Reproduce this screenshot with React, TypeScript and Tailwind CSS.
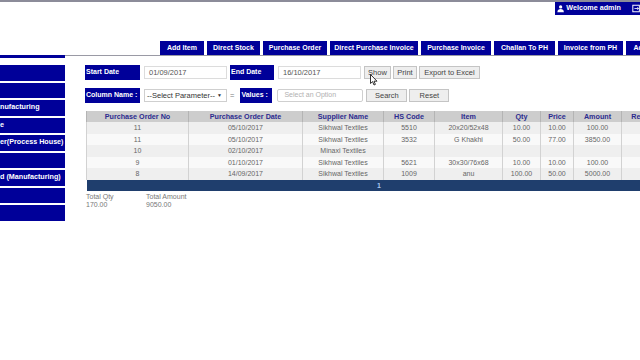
import React from 'react'

const tabs: [string, string][] = [
  ['Add Item', 'w-[44px]'],
  ['Direct Stock', 'w-[53px]'],
  ['Purchase Order', 'w-[64px]'],
  ['Direct Purchase Invoice', 'w-[88px]'],
  ['Purchase Invoice', 'w-[70px]'],
  ['Challan To PH', 'w-[61px]'],
  ['Invoice from PH', 'w-[65px]'],
  ['Add Opening Stock', 'w-[80px]'],
]

const sideItems = ['', '', 'nufacturing', 'e', 'er(Process House)', '', 'd (Manufacturing)', '', '']

const columns: [string, string][] = [
  ['Purchase Order No', 'w-[102px]'],
  ['Purchase Order Date', 'w-[114px]'],
  ['Supplier Name', 'w-[81px]'],
  ['HS Code', 'w-[51px]'],
  ['Item', 'w-[68px]'],
  ['Qty', 'w-[38px]'],
  ['Price', 'w-[33px]'],
  ['Amount', 'w-[48px]'],
  ['Remarks', 'w-[50px]'],
]

const rows = [
  ['11', '05/10/2017', 'Sikhwal Textiles', '5510', '20x20/52x48', '10.00', '10.00', '100.00', ''],
  ['11', '05/10/2017', 'Sikhwal Textiles', '3532', 'G Khakhi', '50.00', '77.00', '3850.00', ''],
  ['10', '02/10/2017', 'Minaxi Textiles', '', '', '', '', '', ''],
  ['9', '01/10/2017', 'Sikhwal Textiles', '5621', '30x30/76x68', '10.00', '10.00', '100.00', ''],
  ['8', '14/09/2017', 'Sikhwal Textiles', '1009', 'anu', '100.00', '50.00', '5000.00', ''],
]

function Label({ text, className }: { text: string; className: string }) {
  return (
    <div className={`h-[15px] bg-[#000099] text-white font-bold text-[7px] flex items-center pl-[1px] whitespace-nowrap ${className}`}>
      {text}
    </div>
  )
}

function Btn({ text, className }: { text: string; className: string }) {
  return (
    <button className={`h-[13px] bg-[#eeeeee] border border-[#c4c4c4] text-[7.5px] text-[#444] flex items-center justify-center leading-none whitespace-nowrap ${className}`}>
      {text}
    </button>
  )
}

export default function App() {
  return (
    <div className="relative w-[640px] h-[360px] overflow-hidden bg-white border-t-2 border-[#8c8c99] font-['Liberation_Sans',Arial,sans-serif]">
      {/* top bar */}
      <div className="flex justify-end h-[13px]">
        <div className="w-[85px] bg-[#000099] flex items-center pl-[2px] text-white font-bold text-[7.2px] whitespace-nowrap">
          <svg width="8" height="9" viewBox="0 0 10 10" className="mr-[2px]">
            <circle cx="5" cy="2.8" r="2.3" fill="white" />
            <path d="M0.5 10 C0.8 6.5 2.5 5.6 5 5.6 C7.5 5.6 9.2 6.5 9.5 10 Z" fill="white" />
          </svg>
          Welcome admin
          <svg width="9" height="9" viewBox="0 0 10 10" className="ml-[11px]">
            <rect x="1" y="1" width="8" height="8" fill="none" stroke="white" strokeWidth="1.2" />
            <path d="M3 5 H8 M6.5 3.5 L8 5 L6.5 6.5" stroke="white" strokeWidth="1" fill="none" />
          </svg>
        </div>
      </div>

      {/* tabs */}
      <div className="mt-[26px] pl-[160px] flex gap-[3px] h-[14px]">
        {tabs.map(([t, w]) => (
          <div key={t} className={`${w} shrink-0 bg-[#000099] text-white font-bold text-[7px] flex items-center justify-center whitespace-nowrap`}>
            {t}
          </div>
        ))}
      </div>

      <div className="flex">
        {/* sidebar */}
        <div className="w-[65px] shrink-0">
          <div className="h-[3px] bg-[#000099]" />
          <div className="mt-[7px] flex flex-col gap-[2px]">
            {sideItems.map((s, i) => (
              <div key={i} className="h-[15.5px] bg-[#000099] text-white font-bold text-[7.2px] flex items-center whitespace-nowrap overflow-hidden">
                {s}
              </div>
            ))}
          </div>
        </div>

        {/* main */}
        <div className="flex-1 min-w-0 border-t border-[#9a9aa5] pl-[20px] pt-[9px]">
          <div className="flex items-center h-[15px]">
            <Label text="Start Date" className="w-[55px]" />
            <div className="ml-[4px] w-[83px] h-[13px] border border-[#dcdcdc] text-[7.5px] text-[#555] pl-[4px] flex items-center">01/09/2017</div>
            <Label text="End Date" className="ml-[3px] w-[44px]" />
            <div className="ml-[4px] w-[83px] h-[13px] border border-[#dcdcdc] text-[7.5px] text-[#555] pl-[4px] flex items-center">16/10/2017</div>
            <Btn text="Show" className="ml-[3px] w-[27px]" />
            <Btn text="Print" className="ml-[2px] w-[24px]" />
            <Btn text="Export to Excel" className="ml-[2px] w-[61px]" />
          </div>

          <div className="flex items-center h-[15px] mt-[8px]">
            <Label text="Column Name :" className="w-[55px]" />
            <div className="ml-[4px] w-[83px] h-[13px] border border-[#cfcfcf] text-[7.5px] text-[#333] pl-[2px] pr-[4px] flex items-center justify-between whitespace-nowrap">
              <span>--Select Parameter--</span>
              <span className="text-[5px]">▼</span>
            </div>
            <span className="ml-[3px] text-[7.5px] text-[#777]">=</span>
            <Label text="Values :" className="ml-[6px] w-[32px]" />
            <div className="ml-[5px] w-[86px] h-[13px] border border-[#cfcfcf] rounded-[2px] text-[7px] text-[#b0b0b0] pl-[6px] flex items-center whitespace-nowrap">Select an Option</div>
            <Btn text="Search" className="ml-[3px] w-[41px]" />
            <Btn text="Reset" className="ml-[2px] w-[40px]" />
          </div>

          <table className="mt-[8px] ml-[1px] w-[585px] table-fixed border-collapse text-[7px]">
            <thead>
              <tr className="h-[11px] bg-[#cdcdcd]">
                {columns.map(([c, w]) => (
                  <th key={c} className={`${w} p-0 font-bold text-[7.2px] text-[#2b2b8f] border-x border-[#b4b4b4] whitespace-nowrap leading-none`}>
                    {c}
                  </th>
                ))}
              </tr>
            </thead>
            <tbody>
              {rows.map((r, i) => (
                <tr key={i} className={`h-[11.5px] ${i % 2 === 0 ? 'bg-[#efefef]' : 'bg-[#f9f9f9]'}`}>
                  {r.map((v, j) => (
                    <td key={j} className="p-0 text-center text-[#666] border-x border-[#d2d2d2] whitespace-nowrap leading-none">
                      {v}
                    </td>
                  ))}
                </tr>
              ))}
              <tr className="h-[11px] bg-[#1f3e6d]">
                <td colSpan={9} className="p-0 text-center text-[#a9c8f0] font-bold leading-none">1</td>
              </tr>
            </tbody>
          </table>

          <div className="mt-[2px] ml-[1px] flex text-[7px] text-[#777] leading-[8.5px]">
            <div className="w-[60px]">
              <div>Total Qty</div>
              <div>170.00</div>
            </div>
            <div>
              <div>Total Amount</div>
              <div>9050.00</div>
            </div>
          </div>
        </div>
      </div>

      {/* mouse cursor */}
      <svg width="8" height="12" viewBox="0 0 8 12" className="absolute left-[370px] top-[72px]">
        <path d="M0.5 0.5 L0.5 9.5 L2.6 7.6 L4 11 L5.4 10.4 L4 7.2 L7 7.2 Z" fill="white" stroke="black" strokeWidth="0.8" />
      </svg>
    </div>
  )
}
